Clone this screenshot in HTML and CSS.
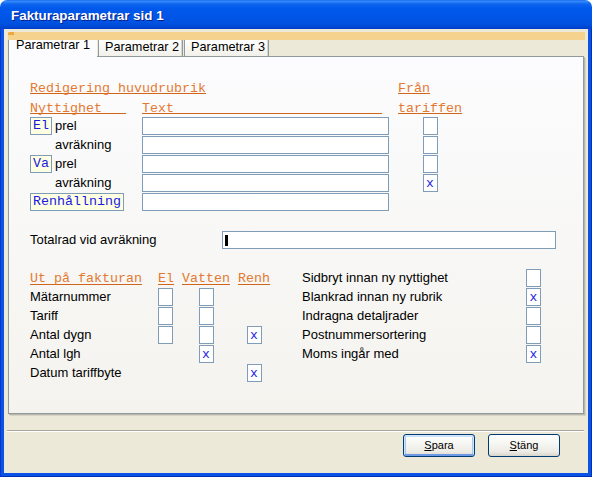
FILE: index.html
```html
<!DOCTYPE html>
<html lang="sv">
<head>
<meta charset="utf-8">
<title>Fakturaparametrar sid 1</title>
<link rel="stylesheet" href="styles.css">
</head>
<body>
<div class="window">
  <div class="titlebar"><span class="title">Fakturaparametrar sid 1</span></div>
  <div class="frame">
    <div class="client">
      <div class="band"></div>
      <div class="tabs">
        <div class="tab active">Parametrar 1</div>
        <div class="tab">Parametrar 2</div>
        <div class="tab">Parametrar 3</div>
      </div>
      <div class="panel">
        <div class="sec1">
          <div class="hd hd1 span2">Redigering huvudrubrik</div>
          <div class="hd hd1">Från</div>

          <div class="hd hd1 w96">Nyttighet</div>
          <div class="hd hd1 w240">Text</div>
          <div class="hd hd1">tariffen</div>

          <div class="nyt"><span class="tag">El</span><span class="lbl">prel</span></div>
          <div class="field"></div>
          <div class="cb"></div>

          <div class="nyt indent"><span class="lbl">avräkning</span></div>
          <div class="field"></div>
          <div class="cb"></div>

          <div class="nyt"><span class="tag">Va</span><span class="lbl">prel</span></div>
          <div class="field"></div>
          <div class="cb"></div>

          <div class="nyt indent"><span class="lbl">avräkning</span></div>
          <div class="field"></div>
          <div class="cb">x</div>

          <div class="nyt"><span class="tag">Renhållning</span></div>
          <div class="field"></div>
          <div></div>
        </div>

        <div class="totalrow">
          <div class="lbl totlbl">Totalrad vid avräkning</div>
          <div class="field totfield"><span class="caret"></span></div>
        </div>

        <div class="sec2">
          <div class="grid-left">
            <div class="hd hd2">Ut på fakturan</div>
            <div class="hd hd2">El</div>
            <div class="hd hd2">Vatten</div>
            <div class="hd hd2">Renh</div>

            <div class="lbl">Mätarnummer</div>
            <div class="cb cs"></div>
            <div class="cb cc"></div>
            <div></div>

            <div class="lbl">Tariff</div>
            <div class="cb cs"></div>
            <div class="cb cc"></div>
            <div></div>

            <div class="lbl">Antal dygn</div>
            <div class="cb cs"></div>
            <div class="cb cc"></div>
            <div class="cb cc">x</div>

            <div class="lbl">Antal lgh</div>
            <div></div>
            <div class="cb cc">x</div>
            <div></div>

            <div class="lbl">Datum tariffbyte</div>
            <div></div>
            <div></div>
            <div class="cb cc">x</div>
          </div>

          <div class="grid-right">
            <div class="lbl">Sidbryt innan ny nyttighet</div>
            <div class="cb"></div>
            <div class="lbl">Blankrad innan ny rubrik</div>
            <div class="cb">x</div>
            <div class="lbl">Indragna detaljrader</div>
            <div class="cb"></div>
            <div class="lbl">Postnummersortering</div>
            <div class="cb"></div>
            <div class="lbl">Moms ingår med</div>
            <div class="cb">x</div>
          </div>
        </div>
      </div>
      <div class="sep"></div>
      <div class="buttons">
        <div class="btn default"><u>S</u>para</div>
        <div class="btn"><u>S</u>täng</div>
      </div>
    </div>
  </div>
</div>
</body>
</html>
```
FILE: styles.css
```css
* { box-sizing: border-box; }
html, body { margin: 0; padding: 0; }
body {
  width: 592px;
  height: 477px;
  overflow: hidden;
  background: #ffffff;
  font-family: "Liberation Sans", Arial, sans-serif;
  font-size: 13px;
  color: #000;
}
.window {
  width: 592px;
  height: 477px;
  display: flex;
  flex-direction: column;
}
.titlebar {
  height: 29px;
  flex: none;
  border-radius: 7px 7px 0 0;
  padding: 2px 0 0 11px;
  background: linear-gradient(to bottom,
    #0A5FEF 0, #3D8FF9 1px, #2C80F7 2px, #0E66EF 4px, #0059EC 8px,
    #0055E6 18px, #0050DF 24px, #0047D4 27px, #003CC2 29px);
}
.title {
  color: #ffffff;
  font-weight: bold;
  font-size: 13.4px;
  line-height: 27px;
  text-shadow: 1px 1px 0 #0A1E8C;
  white-space: nowrap;
}
.frame {
  flex: 1;
  display: flex;
  padding: 0 4px 4px 4px;
  background: #0B52E6;
  box-shadow: inset 1px 0 #0838C8, inset -1px 0 #0031B4, inset 0 -1px #0031B4;
}
.client {
  flex: 1;
  display: flex;
  flex-direction: column;
  background: #ECE9D8;
}
.band {
  height: 8px;
  margin: 3px 3px 0 4px;
  background: #F5D28D;
  display: flex;
}
.band::before {
  content: "";
  width: 6px;
  height: 3px;
  border-top-left-radius: 2px;
  background: #EDA640;
}
.tabs {
  display: flex;
  height: 16px;
  margin-left: 4px;
  position: relative;
  z-index: 1;
}
.tab {
  height: 16px;
  padding: 0 3px 0 6px;
  margin-right: 1px;
  border: 1px solid #919B9C;
  border-top: none;
  border-bottom: none;
  background: linear-gradient(#FFFFFF, #F1F0EA);
  font-size: 12.7px;
  line-height: 14px;
  white-space: nowrap;
  box-shadow: inset -1px 0 #D8D6CC;
}
.tab.active {
  height: 17px;
  padding: 0 7px 0 7px;
  border-right: none;
  background: #FCFCFE;
  line-height: 10px;
  box-shadow: none;
}
.panel {
  height: 358px;
  margin: 0 4px 0 4px;
  border: 1px solid #919B9C;
  background: linear-gradient(to bottom, #FCFCFE, #F4F3EE);
  box-shadow: 1px 1px 0 #BAB7AB, 2px 2px 0 #D6D3C6;
  padding: 20px 0 0 21px;
}
.hd {
  font-family: "Liberation Mono", "Courier New", monospace;
  font-size: 13.33px;
  color: #E47A32;
  border-bottom: 1px solid #D0661A;
  justify-self: start;
  align-self: start;
  white-space: nowrap;
}
.hd1 {
  height: 17px;
  padding-top: 3px;
  line-height: 17px;
}
.hd2 {
  height: 16px;
  padding-top: 1px;
  line-height: 17px;
}
.span2 { grid-column: 1 / 3; }
.w96 { width: 96px; }
.w240 { width: 240px; }

.sec1 {
  display: grid;
  grid-template-columns: 112px 256px 64px;
  grid-template-rows: 19px 19px;
  grid-auto-rows: 18px;
  row-gap: 1px;
}
.nyt {
  display: flex;
  align-items: center;
}
.nyt.indent { padding-left: 25px; }
.tag {
  height: 18px;
  padding: 0 2px 0 2px;
  margin-right: 3px;
  border: 1px solid #7F9DB9;
  background: #FFFFE1;
  font-family: "Liberation Mono", "Courier New", monospace;
  font-size: 13.33px;
  line-height: 16px;
  color: #1A1AE0;
  white-space: nowrap;
}
.lbl {
  font-size: 13px;
  line-height: 18px;
  white-space: nowrap;
}
.field {
  width: 247px;
  height: 18px;
  border: 1px solid #7F9DB9;
  background: #ffffff;
}
.cb {
  width: 15px;
  height: 18px;
  border: 1px solid #7F9DB9;
  background: #ffffff;
  justify-self: center;
  font-family: "Liberation Mono", "Courier New", monospace;
  font-size: 13px;
  line-height: 17px;
  text-align: center;
  color: #1A1AE6;
}
.cs { justify-self: start; }
.cc { justify-self: center; }

.totalrow {
  display: flex;
  margin-top: 20px;
  height: 18px;
}
.totlbl { width: 192px; }
.totfield {
  width: 334px;
  padding: 3px 0 0 2px;
}
.caret {
  display: block;
  width: 3px;
  height: 11px;
  background: #000;
}

.sec2 {
  display: flex;
  gap: 32px;
  margin-top: 20px;
}
.grid-left {
  display: grid;
  grid-template-columns: 120px 16px 48px 32px;
  column-gap: 8px;
  grid-auto-rows: 18px;
  row-gap: 1px;
}
.grid-right {
  display: grid;
  grid-template-columns: 224px 15px;
  grid-auto-rows: 18px;
  row-gap: 1px;
}

.sep {
  height: 2px;
  margin: 16px 4px 0 3px;
  border-top: 1px solid #ACA899;
  border-bottom: 1px solid #FFFFFF;
}
.buttons {
  display: flex;
  justify-content: flex-end;
  gap: 13px;
  margin-top: 2px;
  padding-right: 28px;
}
.btn {
  width: 72px;
  height: 23px;
  border: 1px solid #003C74;
  border-radius: 3px;
  background: linear-gradient(to bottom, #FFFFFF 0, #F6F6F2 40%, #ECEBE5 80%, #D8D5CB 100%);
  font-size: 11px;
  line-height: 21px;
  text-align: center;
}
.btn.default {
  box-shadow: inset 0 1px 0 1px #CEE3FD, inset 0 -1px 0 1px #6E99E6, inset 1px 0 0 1px #A9C8F5, inset -1px 0 0 1px #A9C8F5;
}
```
